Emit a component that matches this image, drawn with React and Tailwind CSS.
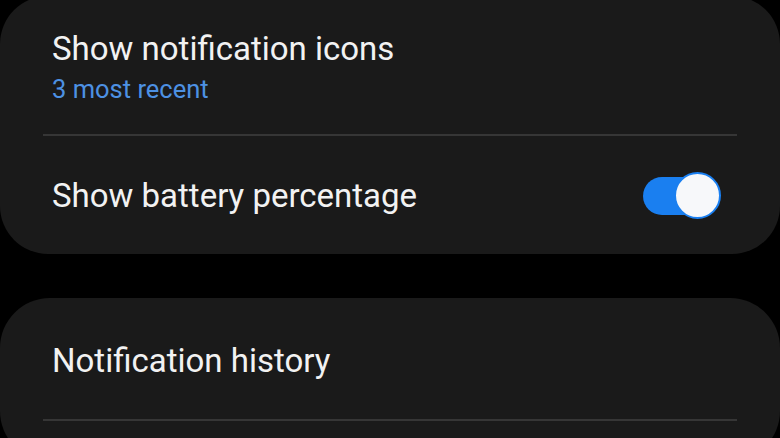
export default function App() {
  return (
    <div className="h-[438px] w-[780px] overflow-hidden bg-black font-['Roboto','Noto_Sans',sans-serif]">
      <div className="-mt-[4px] rounded-[48px] bg-[#1a1a1a]">
        <div className="pl-[52px] pr-[59px] pt-[33px] pb-[30px]">
          <div className="text-[33px] leading-[40px] text-[#f2f2f2]">Show notification icons</div>
          <div className="mt-[5px] text-[25.5px] leading-[30px] text-[#4d91e3]">3 most recent</div>
        </div>
        <div className="mx-[43px] h-[2px] bg-[#363636]" />
        <div className="flex h-[118px] items-center justify-between pl-[52px] pr-[59px] pt-[2px]">
          <div className="text-[33px] leading-[40px] text-[#f2f2f2]">Show battery percentage</div>
          <Toggle />
        </div>
      </div>

      <div className="mt-[44px] rounded-[50px] bg-[#1a1a1a]">
        <div className="h-[121px] pl-[52px] pt-[43px]">
          <div className="text-[33px] leading-[40px] text-[#f2f2f2]">Notification history</div>
        </div>
        <div className="mx-[43px] h-[2px] bg-[#363636]" />
        <div className="h-[40px]" />
      </div>
    </div>
  );
}

const Toggle = () => (
  <div className="relative h-[48px] w-[78px]">
    <div className="absolute left-0 top-[5px] h-[38px] w-[70px] rounded-full bg-[#1a7ff0]" />
    <div className="absolute right-0 top-0 h-[47px] w-[47px] rounded-full border-[2px] border-[#1a7ff0] bg-[#f7f8fa]" />
  </div>
);
